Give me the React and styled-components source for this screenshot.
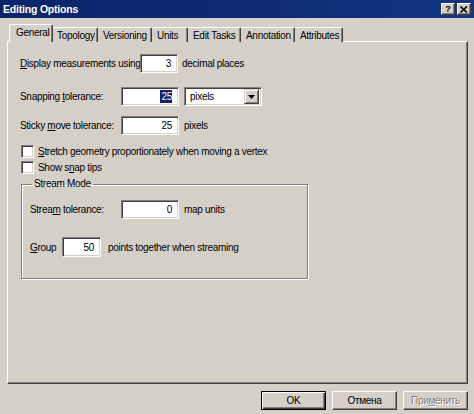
import React from 'react';
import styled, { createGlobalStyle } from 'styled-components';

const GlobalStyle = createGlobalStyle`
  html, body {
    margin: 0;
    padding: 0;
    background: #d4d0c8;
  }
`;

const Window = styled.div`
  width: 474px;
  height: 414px;
  display: flex;
  flex-direction: column;
  background: #d4d0c8;
  font-family: "Liberation Sans", Arial, sans-serif;
  font-size: 10px;
  letter-spacing: -0.3px;
  color: #000;
  overflow: hidden;
`;

const TitleBar = styled.div`
  height: 18px;
  flex: none;
  display: flex;
  align-items: center;
  justify-content: space-between;
  padding: 0 3px 0 3px;
  background: linear-gradient(90deg, #0a246a 0%, #0e2d74 60%, #133681 100%);
  color: #fff;
  font-weight: bold;
  font-size: 10.5px;
  letter-spacing: -0.2px;
`;

const TitleButtons = styled.div`
  display: flex;
  gap: 2px;
`;

const TitleButton = styled.div`
  width: 14px;
  height: 12px;
  box-sizing: border-box;
  background: #d4d0c8;
  border: 1px solid;
  border-color: #fff #404040 #404040 #fff;
  box-shadow: inset -1px -1px #808080;
  display: flex;
  align-items: center;
  justify-content: center;
  color: #000;
  font-size: 9px;
  font-weight: bold;
  line-height: 1;
`;

const Body = styled.div`
  flex: 1;
  display: flex;
  flex-direction: column;
  padding: 7px 6px 0 7px;
  min-height: 0;
`;

const TabStrip = styled.div`
  display: flex;
  align-items: flex-end;
  height: 17px;
  padding-left: 2px;
  position: relative;
  z-index: 1;
  margin-bottom: -1px;
`;

const Tab = styled.div`
  width: ${(p) => p.$w}px;
  height: ${(p) => (p.$active ? 18 : 15)}px;
  box-sizing: border-box;
  border-top: 1px solid #fff;
  border-left: ${(p) => (p.$first || p.$active ? '1px solid #fff' : 'none')};
  border-right: 1px solid #404040;
  box-shadow: inset -1px 0 #808080;
  background: #d4d0c8;
  display: flex;
  align-items: center;
  padding-left: ${(p) => p.$pad}px;
  padding-bottom: ${(p) => (p.$active ? 2 : 0)}px;
  white-space: nowrap;
  border-top-left-radius: 2px;
  border-top-right-radius: 2px;
`;

const Panel = styled.div`
  flex: 1;
  box-sizing: border-box;
  border-top: 1px solid #fff;
  border-left: 1px solid #fff;
  border-right: 1px solid #404040;
  border-bottom: 1px solid #404040;
  box-shadow: inset -1px -1px #808080;
  padding: 12px 12px 0 12px;
  display: flex;
  flex-direction: column;
`;

const Row = styled.div`
  display: flex;
  align-items: center;
  height: ${(p) => p.$h || 19}px;
  margin-top: ${(p) => p.$top || 0}px;
  white-space: nowrap;
`;

const Label = styled.span`
  width: ${(p) => p.$w}px;
  flex: none;
`;

const After = styled.span`
  margin-left: ${(p) => p.$gap}px;
`;

const Key = styled.u`
  text-decoration: underline;
  text-underline-offset: 1px;
`;

const Field = styled.div`
  width: ${(p) => p.$w}px;
  height: ${(p) => p.$h || 19}px;
  flex: none;
  box-sizing: border-box;
  background: #fff;
  border-top: 1px solid #808080;
  border-left: 1px solid #808080;
  border-right: 1px solid #fff;
  border-bottom: 1px solid #fff;
  box-shadow: inset 1px 1px #404040, inset -1px -1px #d4d0c8;
  display: flex;
  align-items: center;
  justify-content: flex-end;
  padding-right: 6px;
`;

const Selected = styled.span`
  background: #0a246a;
  color: #fff;
  padding: 0 0 0 1px;
  line-height: 13px;
`;

const Combo = styled.div`
  width: 78px;
  height: 19px;
  margin-left: 5px;
  box-sizing: border-box;
  background: #fff;
  border-top: 1px solid #808080;
  border-left: 1px solid #808080;
  border-right: 1px solid #fff;
  border-bottom: 1px solid #fff;
  box-shadow: inset 1px 1px #404040, inset -1px -1px #d4d0c8;
  display: flex;
  align-items: center;
  justify-content: space-between;
  padding: 2px 2px 2px 5px;
`;

const ComboButton = styled.div`
  width: 15px;
  height: 15px;
  box-sizing: border-box;
  background: #d4d0c8;
  border: 1px solid;
  border-color: #d4d0c8 #404040 #404040 #d4d0c8;
  box-shadow: inset 1px 1px #fff, inset -1px -1px #808080;
  display: flex;
  align-items: center;
  justify-content: center;
`;

const CheckRow = styled.label`
  display: flex;
  align-items: center;
  gap: 4px;
  height: 13px;
  margin-top: ${(p) => p.$top}px;
  margin-left: 1px;
  white-space: nowrap;
`;

const Box = styled.span`
  width: 13px;
  height: 13px;
  flex: none;
  box-sizing: border-box;
  background: #fff;
  border-top: 1px solid #808080;
  border-left: 1px solid #808080;
  border-right: 1px solid #fff;
  border-bottom: 1px solid #fff;
  box-shadow: inset 1px 1px #404040, inset -1px -1px #d4d0c8;
`;

const Group = styled.fieldset`
  margin: 4px 0 0 1px;
  width: 287px;
  height: 101px;
  box-sizing: border-box;
  padding: 8px 8px 0 8px;
  border: 1px solid #808080;
  box-shadow: inset 1px 1px #fff, 1px 1px #fff;
  display: flex;
  flex-direction: column;
`;

const Legend = styled.legend`
  padding: 0 2px;
  margin-left: 2px;
  line-height: 12px;
`;

const Footer = styled.div`
  flex: none;
  display: flex;
  justify-content: flex-end;
  gap: 6px;
  padding: 7px 6px 4px 0;
`;

const Button = styled.div`
  width: 65px;
  height: 19px;
  box-sizing: border-box;
  background: #d4d0c8;
  display: flex;
  align-items: center;
  justify-content: center;
  border: 1px solid;
  border-color: ${(p) => (p.$default ? '#000' : '#fff #404040 #404040 #fff')};
  box-shadow: ${(p) => (p.$default
    ? 'inset 1px 1px #fff, inset -1px -1px #404040, inset -2px -2px #808080'
    : 'inset -1px -1px #808080')};
  color: ${(p) => (p.$disabled ? '#808080' : '#000')};
  text-shadow: ${(p) => (p.$disabled ? '1px 1px #fff' : 'none')};
`;

const tabs = [
  { name: 'General', w: 44, pad: 6 },
  { name: 'Topology', w: 45, pad: 4 },
  { name: 'Versioning', w: 54, pad: 5 },
  { name: 'Units', w: 36, pad: 5 },
  { name: 'Edit Tasks', w: 53, pad: 5 },
  { name: 'Annotation', w: 54, pad: 5 },
  { name: 'Attributes', w: 48, pad: 5 },
];

export default function App() {
  return (
    <Window>
      <GlobalStyle />
      <TitleBar>
        <span>Editing Options</span>
        <TitleButtons>
          <TitleButton>?</TitleButton>
          <TitleButton>
            <svg width="8" height="7" viewBox="0 0 8 7">
              <path d="M0.5 0.5 L7 6.5 M7 0.5 L0.5 6.5" stroke="#000" strokeWidth="1.6" />
            </svg>
          </TitleButton>
        </TitleButtons>
      </TitleBar>

      <Body>
        <TabStrip>
          {tabs.map((t, i) => (
            <Tab key={t.name} $w={t.w} $pad={t.pad} $active={i === 0} $first={i === 0}>
              {t.name}
            </Tab>
          ))}
        </TabStrip>

        <Panel>
          <Row>
            <Label $w={120}><Key>D</Key>isplay measurements using</Label>
            <Field $w={38}>3</Field>
            <After $gap={4}>decimal places</After>
          </Row>

          <Row $top={14}>
            <Label $w={101}>Snapping <Key>t</Key>olerance:</Label>
            <Field $w={58}><Selected>25</Selected></Field>
            <Combo>
              <span>pixels</span>
              <ComboButton>
                <svg width="7" height="4" viewBox="0 0 7 4">
                  <path d="M0 0 H7 L3.5 4 Z" fill="#000" />
                </svg>
              </ComboButton>
            </Combo>
          </Row>

          <Row $top={10}>
            <Label $w={101}>Sticky <Key>m</Key>ove tolerance:</Label>
            <Field $w={58}>25</Field>
            <After $gap={5}>pixels</After>
          </Row>

          <CheckRow $top={10}>
            <Box />
            <span><Key>S</Key>tretch geometry proportionately when moving a vertex</span>
          </CheckRow>
          <CheckRow $top={3}>
            <Box />
            <span>Show s<Key>n</Key>ap tips</span>
          </CheckRow>

          <Group>
            <Legend>Stream Mode</Legend>
            <Row $top={2}>
              <Label $w={91}>Strea<Key>m</Key> tolerance:</Label>
              <Field $w={58}>0</Field>
              <After $gap={5}>map units</After>
            </Row>
            <Row $top={18} $h={20}>
              <Label $w={32}><Key>G</Key>roup</Label>
              <Field $w={39} $h={20}>50</Field>
              <After $gap={7}>points together when streaming</After>
            </Row>
          </Group>
        </Panel>
      </Body>

      <Footer>
        <Button $default>OK</Button>
        <Button>Отмена</Button>
        <Button $disabled>При<Key>м</Key>енить</Button>
      </Footer>
    </Window>
  );
}
